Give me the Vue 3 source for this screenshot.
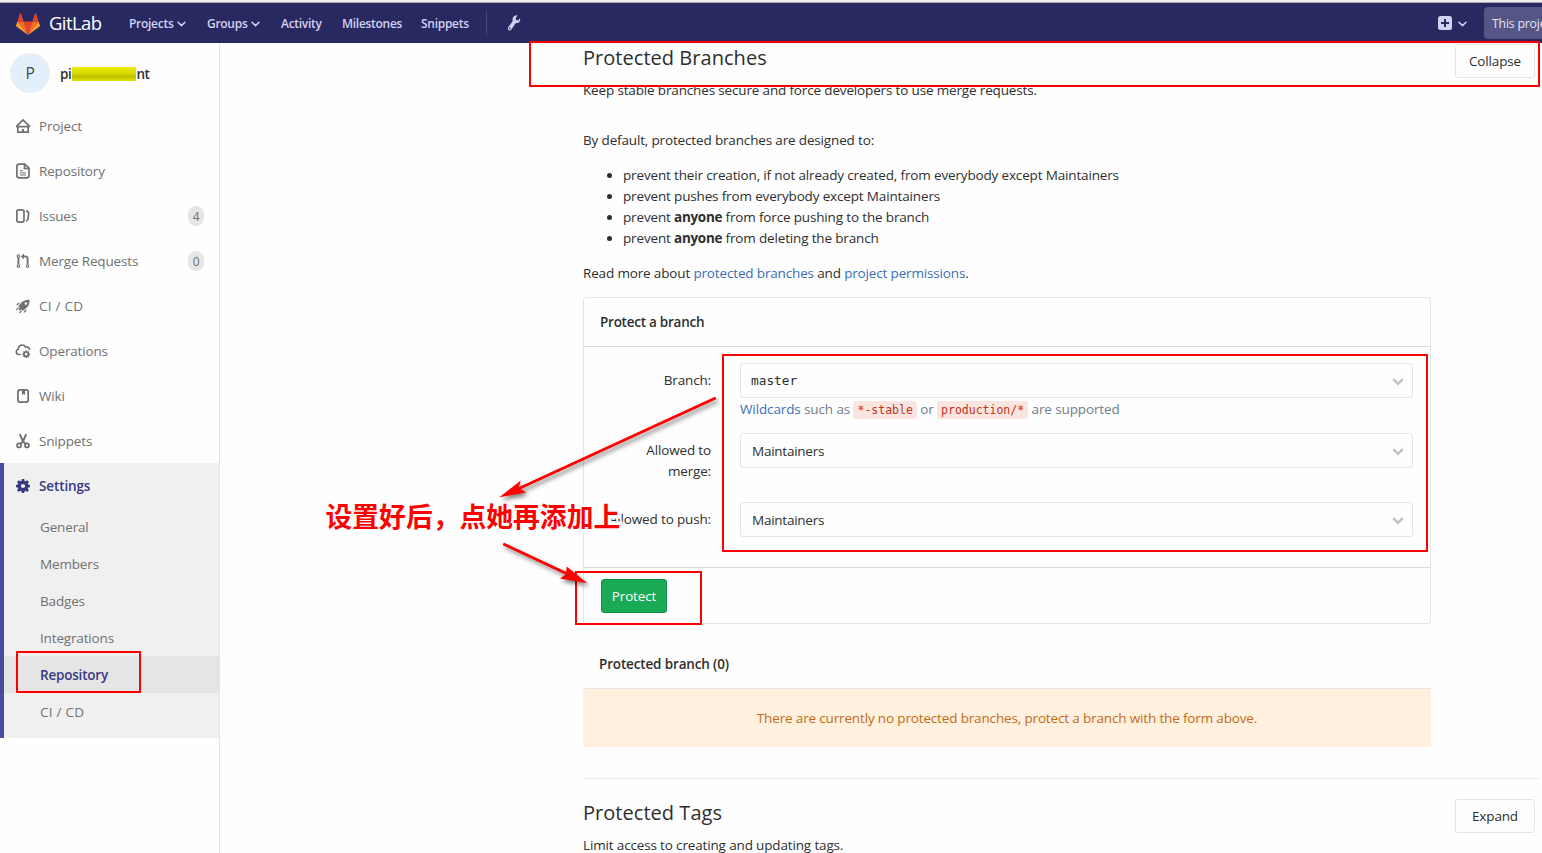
<script setup>
const topLinks = [
  { label: 'Projects', chevron: true, cls: 'l-projects' },
  { label: 'Groups', chevron: true, cls: 'l-groups' },
  { label: 'Activity', cls: 'l-activity' },
  { label: 'Milestones', cls: 'l-milestones' },
  { label: 'Snippets', cls: 'l-snippets' },
]
const sideItems = [
  { label: 'Project', icon: 'home' },
  { label: 'Repository', icon: 'doc' },
  { label: 'Issues', icon: 'issues', count: 4 },
  { label: 'Merge Requests', icon: 'merge', count: 0 },
  { label: 'CI / CD', icon: 'rocket' },
  { label: 'Operations', icon: 'cloud' },
  { label: 'Wiki', icon: 'wiki' },
  { label: 'Snippets', icon: 'scissors' },
]
const settingsItems = ['General', 'Members', 'Badges', 'Integrations', 'Repository', 'CI / CD']
</script>

<template>
  <div class="page">
    <header class="navbar">
      <svg class="logo" width="24" height="22" viewBox="0 0 24 22">
        <path fill="#e24329" d="M12 22 16.4 8.4H7.6z" />
        <path fill="#fc6d26" d="M12 22 7.6 8.4H1.4z" />
        <path fill="#fca326" d="M1.4 8.4.1 12.5c-.1.4 0 .8.3 1L12 22z" />
        <path fill="#e24329" d="M1.4 8.4h6.2L4.9.3c-.1-.4-.7-.4-.8 0z" />
        <path fill="#fc6d26" d="m12 22 4.4-13.6h6.2z" />
        <path fill="#fca326" d="m22.6 8.4 1.3 4.1c.1.4 0 .8-.3 1L12 22z" />
        <path fill="#e24329" d="M22.6 8.4h-6.2L19.1.3c.1-.4.7-.4.8 0z" />
      </svg>
      <span class="brand">GitLab</span>
      <nav class="links">
        <a v-for="l in topLinks" :key="l.label" :class="l.cls">
          {{ l.label }}
          <svg v-if="l.chevron" class="chev" width="9" height="6" viewBox="0 0 9 6"><path d="M1 1.200 4.500 4.600 8 1.200" /></svg>
        </a>
      </nav>
      <span class="divider"></span>
      <svg class="wrench" width="14" height="16" viewBox="0 0 14 16">
        <path d="M10.6.3 8.7 2.9l.4 2 2 .5L13 3.200c.5 1.500.1 3-1 4-.9.8-2.100 1-3.200.8L4.400 14.500c-.7 1-1.900 1.200-2.800.6-.9-.7-1-1.900-.4-2.800L5.800 6C5.300 4.700 5.500 3.200 6.300 2.100 7.300.7 9 0 10.600.3zM2.900 12.600a.8.8 0 1 0 0 1.600.8.8 0 0 0 0-1.600z" fill-rule="evenodd" />
      </svg>
      <div class="nav-right">
        <svg width="14" height="14" viewBox="0 0 14 14"><rect width="14" height="14" rx="2.500" fill="#d1d1f0" /><path d="M7 3v8M3 7h8" stroke="#292961" stroke-width="2" /></svg>
        <svg class="chev" width="9" height="6" viewBox="0 0 9 6"><path d="M1 1.200 4.500 4.600 8 1.200" /></svg>
        <div class="search">This project</div>
      </div>
    </header>

    <div class="columns">
      <aside class="sidebar">
        <div class="context">
          <span class="avatar">P</span>
          <span class="project">pi<i class="smudge"></i>nt</span>
        </div>
        <ul class="menu">
          <li v-for="it in sideItems" :key="it.label" class="item">
            <svg class="icon" width="16" height="16" viewBox="0 0 16 16">
              <g v-if="it.icon === 'home'" class="s">
                <path d="M1.200 8.600 8 1.900l6.800 6.700M1.200 8.600h13.600" stroke-linejoin="round" />
                <path d="M2.800 8.600v5.500h10.400V8.600" /><path d="M8 11v3" stroke-width="2.200" />
              </g>
              <g v-else-if="it.icon === 'doc'" class="s">
                <path d="M4.200 1.200h5.600l4.200 4v7.300a2.300 2.300 0 0 1-2.300 2.300H4.200a2.300 2.300 0 0 1-2.300-2.300v-9a2.300 2.300 0 0 1 2.300-2.300z" />
                <path d="M9.500 1.300v4.200h4.300" /><path d="M5 7.700h3M5 9.900h6M5 12h6" stroke-width="1" />
              </g>
              <g v-else-if="it.icon === 'issues'" class="s">
                <rect x="1.800" y="1.900" width="7.200" height="12.200" rx="2" /><path d="M11 3.100c2.100.2 2.900 1 2.600 3l-.7 5c-.2 1.200-.7 1.800-1.900 1.900" />
              </g>
              <g v-else-if="it.icon === 'merge'" class="s m">
                <circle cx="3.400" cy="3" r="1.300" /><circle cx="3.400" cy="13" r="1.300" /><circle cx="12.600" cy="13" r="1.300" />
                <path d="M3.400 4.300v7.300" stroke-width="1.900" /><path d="M12.600 11.600V6c0-1.700-.8-2.600-2.400-2.600H8" stroke-width="1.900" /><path d="M9 .6v5.600L5.900 3.400z" fill="#707070" stroke="none" />
              </g>
              <g v-else-if="it.icon === 'rocket'">
                <path fill-rule="evenodd" d="M14.600 1.700c.3 3.600-.8 6.500-4 9L7.900 12.700 6.600 11.500 4.800 12.600 3.600 11.400 4.700 9.500 3.400 8.200 5.600 5.400c2.400-3 5.400-4 9-3.700zM10.900 4.200a1.300 1.300 0 1 0 0 2.600 1.300 1.300 0 0 0 0-2.600z" />
                <path d="M4.900 4.500 3.300 4.800.9 7.300l2.200-.4zM11.600 11.300l-.3 1.700-2.600 2.300.3-2.300z" />
                <path d="m3.500 9.600-2.300 2.300M6.500 12.700l-2 2.300" stroke="#707070" stroke-width="1.200" />
              </g>
              <g v-else-if="it.icon === 'cloud'">
                <path class="s" d="M5.800 11.500H4.300c-1.700 0-3-1.200-3-2.700 0-1.200.8-2.300 2-2.600C3.300 3.600 5 2 7.200 2c1.500 0 2.700.7 3.400 2 2.300-.4 3.900 1 4 2.900" />
                <circle class="s" cx="11.200" cy="11.200" r="2.200" />
                <path d="M11.200 7.400v1.800m0 4v1.900M7.400 11.200h1.800m4 0h1.900M8.500 8.500l1.300 1.300m2.800 2.800 1.300 1.300m0-5.400-1.300 1.300m-2.800 2.800-1.300 1.300" stroke="#707070" stroke-width="1.500" />
              </g>
              <g v-else-if="it.icon === 'wiki'" class="s">
                <rect x="2.900" y="1.900" width="10.300" height="12.200" rx="2" /><path d="M7 2v5l1.500-1.200L10 7V2z" fill="#707070" stroke="none" />
              </g>
              <g v-else class="s">
                <circle cx="4" cy="12.400" r="2" /><circle cx="12" cy="12.400" r="2" /><path d="m4.800 1.200 3.100 7 2.700 2.900M11.200 1.200 8.100 8.200l-2.700 2.900" stroke-width="1.900" />
              </g>
            </svg>
            <span class="label" :class="{ wide: it.label === 'CI / CD' }">{{ it.label }}</span>
            <span v-if="it.count !== undefined" class="count">{{ it.count }}</span>
          </li>
        </ul>
        <div class="active-group">
          <div class="item settings">
            <svg class="icon" width="16" height="16" viewBox="0 0 16 16">
              <path fill-rule="evenodd" d="M6.800 1h2.400l.4 1.900 1 .4 1.600-1.100 1.700 1.700-1.100 1.600.4 1 1.800.4v2.300l-1.800.4-.4 1 1.100 1.600-1.700 1.700-1.600-1.100-1 .4L9.200 15H6.800l-.4-1.800-1-.4-1.600 1.100-1.700-1.700 1.100-1.600-.4-1L1 9.200V6.900l1.800-.4.4-1-1.100-1.600 1.700-1.700 1.600 1.100 1-.4zM8 5.900a2.100 2.100 0 1 0 0 4.200 2.100 2.100 0 0 0 0-4.200z" />
            </svg>
            <span class="label">Settings</span>
          </div>
          <ul class="submenu">
            <li v-for="(s, i) in settingsItems" :key="s" :class="{ current: i === 4, wide: i === 5 }">{{ s }}</li>
          </ul>
        </div>
      </aside>

      <main class="content">
        <section class="branches">
          <div class="head">
            <div>
              <h4>Protected Branches</h4>
              <p class="keep">Keep stable branches secure and force developers to use merge requests.</p>
            </div>
            <button class="btn">Collapse</button>
          </div>
          <div class="body">
            <p class="intro">By default, protected branches are designed to:</p>
            <ul class="rules">
              <li>prevent their creation, if not already created, from everybody except Maintainers</li>
              <li>prevent pushes from everybody except Maintainers</li>
              <li>prevent <strong>anyone</strong> from force pushing to the branch</li>
              <li>prevent <strong>anyone</strong> from deleting the branch</li>
            </ul>
            <p class="more">Read more about <a>protected branches</a> and <a>project permissions</a>.</p>

            <div class="card">
              <div class="card-head">Protect a branch</div>
              <div class="card-body">
                <div class="row r-branch">
                  <label>Branch:</label>
                  <div class="field">
                    <div class="select mono">master<svg width="12" height="8" viewBox="0 0 12 8"><path d="m1.200 1.200 4.800 4.600 4.800-4.600" /></svg></div>
                    <div class="hint"><a>Wildcards</a> such as <code>*-stable</code> or <code>production/*</code> are supported</div>
                  </div>
                </div>
                <div class="row r-merge">
                  <label>Allowed to merge:</label>
                  <div class="field">
                    <div class="select">Maintainers<svg width="12" height="8" viewBox="0 0 12 8"><path d="m1.200 1.200 4.800 4.600 4.800-4.600" /></svg></div>
                  </div>
                </div>
                <div class="row">
                  <label>Allowed to push:</label>
                  <div class="field">
                    <div class="select">Maintainers<svg width="12" height="8" viewBox="0 0 12 8"><path d="m1.200 1.200 4.800 4.600 4.800-4.600" /></svg></div>
                  </div>
                </div>
              </div>
              <div class="card-foot"><button class="protect">Protect</button></div>
            </div>

            <div class="list-head">Protected branch (0)</div>
            <div class="empty">There are currently no protected branches, protect a branch with the form above.</div>
          </div>
        </section>
        <section class="tags">
          <div class="head">
            <div>
              <h4>Protected Tags</h4>
              <p class="limit">Limit access to creating and updating tags.</p>
            </div>
            <button class="btn">Expand</button>
          </div>
        </section>
      </main>
    </div>

    <div class="frame f-title"></div>
    <div class="frame f-form"></div>
    <div class="frame f-protect"></div>
    <div class="frame f-repo"></div>
    <div class="note">设置好后，点她再添加上</div>
    <svg class="arrows" width="1542" height="853" viewBox="0 0 1542 853">
      <g class="arrow">
        <path class="line" d="M714.500 398.500 519 488.500" />
        <path class="tip" d="m499.300 497.300 21.500-16.800-2.300 7.500 7.700 4.600z" />
      </g>
      <g class="arrow">
        <path class="line" d="m504.500 544.500 63 29.500" />
        <path class="tip" d="m587.300 583.300-20.600-16.800-.8 7.700-5.900 4.300z" />
      </g>
    </svg>
  </div>
</template>

<style>
html, body { overflow: hidden; background: #fefefe; }
</style>

<style scoped>
* { box-sizing: border-box; }
.page {
  position: relative; width: 1542px; height: 853px; overflow: hidden; background: #fefefe; color: #2e2e2e;
  font: 13.500px/21px "Open Sans", "Noto Sans", "Noto Sans CJK SC", sans-serif; letter-spacing: -0.155px;
  border-top: 2px solid #eee;
}
ul { list-style: none; margin: 0; padding: 0; }
p, h4 { margin: 0; }
a { color: #3a6fb5; }
.navbar { display: flex; align-items: center; height: 41px; padding-left: 16px; background: #292961; border-top: 1px solid #aaa; color: #d1d1f0; }
.logo { flex: none; margin-top: 1px; }
.brand { width: 53px; margin-left: 9px; color: #fff; font-size: 18.500px; line-height: 24px; letter-spacing: -0.6px; white-space: nowrap; }
.links { display: flex; align-items: center; margin-left: 27px; width: 357px; }
.links a { flex: none; color: #d1d1f0; font-size: 12px; font-weight: 600; white-space: nowrap; letter-spacing: -0.28px; }
.l-projects, .l-groups { display: flex; align-items: center; justify-content: space-between; }
.l-projects { width: 57px; }
.l-groups { width: 53px; margin-left: 21px; }
.l-activity { width: 42px; margin-left: 21px; }
.l-milestones { width: 60px; margin-left: 19px; }
.l-snippets { width: 48px; margin-left: 19px; }
.chev { margin-top: 1px; }
.chev path { fill: none; stroke: #d1d1f0; stroke-width: 1.500; stroke-linecap: round; }
.divider { width: 1px; height: 24px; background: #48487a; }
.wrench { margin-left: 20px; fill: #d1d1f0; }
.nav-right { display: flex; align-items: center; margin-left: auto; }
.nav-right .chev { margin: 2px 17px 0 6px; }
.search { width: 58px; height: 32px; padding-left: 8px; overflow: hidden; white-space: nowrap; background: #565686; border-radius: 4px 0 0 4px; color: #e4e4f8; font-size: 12.300px; line-height: 34px; letter-spacing: -0.2px; }

.columns { display: flex; height: 810px; }
.sidebar { flex: none; width: 220px; border-right: 1px solid #e5e5e5; color: #707070; }
.context { display: flex; align-items: center; height: 60px; padding-left: 10px; }
.avatar { width: 40px; height: 40px; border: 1px solid #eee; border-radius: 50%; background: #e3f0fb; color: #484848; font-size: 15.500px; line-height: 39px; text-align: center; }
.project { display: flex; align-items: center; margin-left: 10px; padding-top: 2px; color: #2e2e2e; font-weight: 600; letter-spacing: -0.4px; }
.smudge { width: 64px; height: 14px; margin-left: 1px; background: linear-gradient(180deg, #eded00, #d8d800 45%, #bdbd00 70%, #e6e600); }
.item { display: flex; align-items: center; height: 45px; padding: 0 15px; }
.icon { flex: none; margin-right: 8px; fill: #707070; }
.label { padding-top: 2px; }
.s { fill: none; stroke: #707070; stroke-width: 1.700; }
.m { stroke-width: 1.100; }
.count { margin-left: auto; width: 16px; height: 20px; border-radius: 8px; background: #e6e6e6; font-size: 12px; line-height: 21px; text-align: center; }
.active-group { height: 275px; border-left: 4px solid #4b4ba3; background: #f0f0f0; }
.settings { padding-left: 11px; color: #393982; font-weight: 600; }
.settings .icon { fill: #393982; }
.settings .label { letter-spacing: -0.12px; }
.submenu li { height: 37px; padding-left: 36px; line-height: 39px; }
.submenu .current { margin-left: -4px; border-left: 4px solid #4b4b95; background: #e5e5e5; color: #393982; font-weight: 600; letter-spacing: -0.2px; }
.wide, .submenu .wide { letter-spacing: 0.25px; }

.content { width: 957px; margin-left: 363px; }
.head { display: flex; justify-content: space-between; }
h4 { font-size: 20px; line-height: 26px; font-weight: 500; letter-spacing: 0.04px; }
.btn { flex: none; width: 80px; height: 34px; margin: 1px 5px 0 0; padding: 0; border: 1px solid #e5e5e5; border-radius: 3px; background: #fefefe; color: #2e2e2e; font: inherit; letter-spacing: inherit; }
.branches { height: 736px; border-bottom: 1px solid #ececec; }
.branches h4 { padding-top: 2px; }
.keep { margin-top: 9px; }
.body { width: 848px; }
.intro { margin-top: 29px; }
.rules { margin: 14px 0; list-style: disc; padding-left: 40px; }
.rules strong { letter-spacing: -0.3px; }
.card { height: 327px; margin-top: 13px; border: 1px solid #e5e5e5; border-radius: 3px; }
.card-head { height: 49px; padding-left: 16px; border-bottom: 1px solid #dcdcdc; line-height: 48px; font-weight: 600; letter-spacing: -0.25px; }
.card-body { height: 221px; padding-top: 16px; border-bottom: 1px solid #dcdcdc; }
.row { display: flex; height: 35px; }
.r-branch { height: 70px; }
.r-merge { height: 69px; }
.row label { width: 127px; padding-top: 7px; padding-left: 20px; text-align: right; }
.row:last-child label { padding-left: 0; }
.field { width: 673px; margin-left: 29px; }
.select { display: flex; align-items: center; justify-content: space-between; height: 35px; padding: 2px 8px 0 11px; border: 1px solid #e5e5e5; border-radius: 3px; letter-spacing: -0.25px; }
.select svg path { fill: none; stroke: #c0c0c0; stroke-width: 2.400; }
.mono, code { font-family: "DejaVu Sans Mono", monospace; letter-spacing: 0; }
.mono { padding: 0 8px 0 10px; font-size: 12.800px; }
.mono svg { margin-top: 2px; }
.hint { margin-top: 1px; color: #707f8a; white-space: nowrap; letter-spacing: -0.12px; }
code { padding: 2px 4px; border-radius: 3px; background: #fbe5e1; color: #c0341d; font-size: 11.500px; }
.card-foot { padding: 11px 17px; }
.protect { width: 66px; height: 34px; padding: 1px 0 0; border: 1px solid #168f48; border-radius: 3px; background: #1aaa55; color: #fff; font: inherit; letter-spacing: inherit; }
.list-head { height: 64px; padding: 30px 16px 0; font-weight: 600; letter-spacing: -0.15px; }
.empty { height: 59px; border-top: 1px solid #e5e5e5; background: #fff1de; color: #c26b18; line-height: 59px; text-align: center; }
.tags h4 { padding-top: 21px; line-height: 26px; }
.tags .btn { margin-top: 20px; }
.limit { margin-top: 9px; letter-spacing: -0.15px; }

.frame { position: absolute; border: 2px solid #f00; }
.f-title { left: 529px; top: 39px; width: 1011px; height: 46px; }
.f-form { left: 722px; top: 352px; width: 706px; height: 198px; }
.f-protect { left: 575px; top: 569px; width: 127px; height: 54px; }
.f-repo { left: 16px; top: 649px; width: 125px; height: 42px; }
.note { position: absolute; left: 325.500px; top: 496px; color: #f00; font: bold 26.800px/36px "Noto Sans CJK SC", sans-serif; letter-spacing: 0; white-space: nowrap; -webkit-text-stroke: 7px #fefefe; paint-order: stroke fill; }
.arrows { position: absolute; left: 0; top: -2px; }
.arrow { filter: drop-shadow(2px 3px 2px rgba(0, 0, 0, 0.5)); }
.line { fill: none; stroke: #f00; stroke-width: 3; stroke-linecap: round; }
.tip { fill: #f00; }
</style>
